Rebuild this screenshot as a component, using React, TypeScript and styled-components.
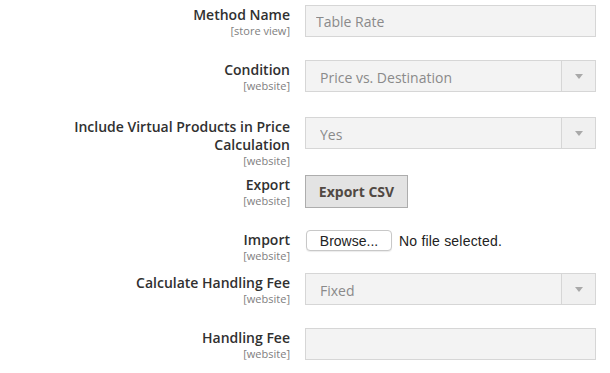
import styled, { createGlobalStyle } from "styled-components";

type Field = {
  label: string;
  scope: string;
  height: number;
  kind: "text" | "select" | "export" | "file";
  value?: string;
};

const fields: Field[] = [
  { label: "Method Name", scope: "[store view]", height: 55, kind: "text", value: "Table Rate" },
  { label: "Condition", scope: "[website]", height: 57, kind: "select", value: "Price vs. Destination" },
  { label: "Include Virtual Products in Price Calculation", scope: "[website]", height: 58, kind: "select", value: "Yes" },
  { label: "Export", scope: "[website]", height: 55, kind: "export" },
  { label: "Import", scope: "[website]", height: 43, kind: "file" },
  { label: "Calculate Handling Fee", scope: "[website]", height: 55, kind: "select", value: "Fixed" },
  { label: "Handling Fee", scope: "[website]", height: 45, kind: "text", value: "" },
];

export default function App() {
  return (
    <>
      <GlobalStyle />
      <Form>
        {fields.map((f) => (
          <Row key={f.label} $h={f.height}>
            <Label>
              <LabelText>{f.label}</LabelText>
              <Scope>{f.scope}</Scope>
            </Label>
            <Control>{renderControl(f)}</Control>
          </Row>
        ))}
      </Form>
    </>
  );
}

function renderControl(f: Field) {
  if (f.kind === "text") {
    return <TextInput disabled defaultValue={f.value} />;
  }
  if (f.kind === "select") {
    return (
      <SelectWrap>
        <Select disabled defaultValue={f.value}>
          <option>{f.value}</option>
        </Select>
        <Arrow>
          <svg width="8" height="5" viewBox="0 0 8 5">
            <path d="M0 0h8L4 5z" fill="#a9a9a9" />
          </svg>
        </Arrow>
      </SelectWrap>
    );
  }
  if (f.kind === "export") {
    return <ExportButton>Export CSV</ExportButton>;
  }
  return (
    <FileRow>
      <BrowseButton>Browse...</BrowseButton>
      <FileName>No file selected.</FileName>
    </FileRow>
  );
}

const GlobalStyle = createGlobalStyle`
  html, body {
    margin: 0;
    background: #ffffff;
    font-family: "Open Sans", "Liberation Sans", sans-serif;
  }
`;

const Form = styled.div`
  width: 610px;
  padding-top: 5px;
  display: flex;
  flex-direction: column;
`;

const Row = styled.div<{ $h: number }>`
  display: flex;
  align-items: flex-start;
  height: ${(p) => p.$h}px;
`;

const Label = styled.div`
  width: 290px;
  padding-left: 60px;
  padding-top: 1px;
  box-sizing: border-box;
  margin-right: 15px;
  text-align: right;
  display: flex;
  flex-direction: column;
  align-items: flex-end;
`;

const LabelText = styled.span`
  font-size: 14px;
  line-height: 18px;
  font-weight: 600;
  color: #303030;
`;

const Scope = styled.span`
  font-size: 11px;
  line-height: 13px;
  color: #808080;
`;

const Control = styled.div`
  width: 291px;
`;

const fieldBox = `
  box-sizing: border-box;
  width: 100%;
  height: 32px;
  border: 1px solid #d6d6d6;
  background: #f3f3f3;
  font-family: "Open Sans", "Liberation Sans", sans-serif;
  font-size: 14px;
  color: #8a8a8a;
  border-radius: 0;
  outline: none;
`;

const TextInput = styled.input`
  ${fieldBox}
  padding: 0 10px;
  display: block;
`;

const SelectWrap = styled.div`
  position: relative;
  width: 100%;
`;

const Select = styled.select`
  ${fieldBox}
  appearance: none;
  -webkit-appearance: none;
  padding: 3px 40px 0 14px;
  display: block;
  opacity: 1;
`;

const Arrow = styled.div`
  position: absolute;
  top: 1px;
  right: 1px;
  bottom: 1px;
  width: 33px;
  border-left: 1px solid #d6d6d6;
  background: #f0f0f0;
  display: flex;
  align-items: center;
  justify-content: center;
`;

const ExportButton = styled.button`
  box-sizing: border-box;
  width: 103px;
  height: 33px;
  border: 1px solid #adadad;
  background: #e3e3e3;
  color: #514943;
  font-family: "Open Sans", "Liberation Sans", sans-serif;
  font-size: 14px;
  font-weight: 700;
  padding: 0;
  border-radius: 0;
`;

const FileRow = styled.div`
  display: flex;
  align-items: center;
  gap: 7px;
  padding-left: 1px;
`;

const BrowseButton = styled.button`
  box-sizing: border-box;
  width: 86px;
  height: 21px;
  border: 1px solid #c8c8c8;
  border-radius: 4px;
  background: #ffffff;
  color: #222222;
  font-family: "Liberation Sans", Arial, sans-serif;
  font-size: 14px;
  padding: 0;
  box-shadow: 0 1px 1px rgba(0, 0, 0, 0.08);
`;

const FileName = styled.span`
  font-family: "Liberation Sans", Arial, sans-serif;
  font-size: 14px;
  letter-spacing: 0.2px;
  color: #222222;
`;
